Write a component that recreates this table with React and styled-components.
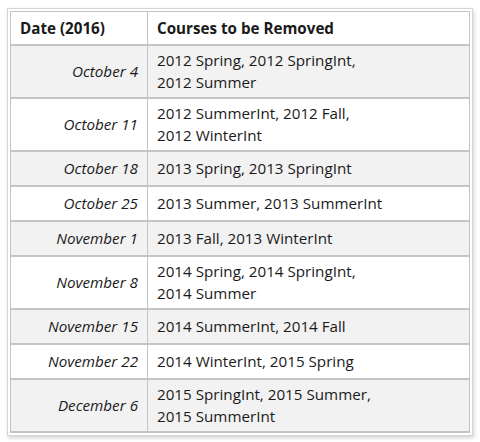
import styled, { createGlobalStyle } from 'styled-components';

const GlobalStyle = createGlobalStyle`
  html, body {
    margin: 0;
    padding: 0;
    background: #ffffff;
  }
  body {
    font-family: "Open Sans", "Noto Sans", "Liberation Sans", sans-serif;
  }
`;

const Page = styled.div`
  width: 480px;
  height: 442px;
  padding: 8px 0 0 7px;
  box-sizing: border-box;
`;

const Frame = styled.div`
  width: 466px;
  box-sizing: border-box;
  border: 1px solid #d6d6d6;
  padding: 2px;
  background: #ffffff;
  box-shadow: 1px 2px 4px rgba(0, 0, 0, 0.18);
`;

const Table = styled.table`
  width: 460px;
  border-collapse: collapse;
  border: 1px solid #bdbdbd;
  font-size: 15.2px;
  color: #1a1a1a;
`;

const HeadCell = styled.th`
  height: 33px;
  padding: 0 9px;
  text-align: left;
  font-weight: 700;
  border: 1px solid #c4c4c4;
  border-bottom-width: 2px;
  background: #ffffff;
  width: ${p => p.$w || 'auto'};
  box-sizing: border-box;
`;

const Row = styled.tr`
  background: ${p => (p.$shade ? '#f2f2f2' : '#ffffff')};
`;

const DateCell = styled.td`
  height: ${p => (p.$tall ? '51px' : '33px')};
  padding: 0 9px;
  text-align: right;
  font-style: italic;
  border: 1px solid #c4c4c4;
  border-bottom-width: 2px;
  line-height: 21px;
`;

const CourseCell = styled.td`
  padding: 0 9px;
  text-align: left;
  border: 1px solid #c4c4c4;
  border-bottom-width: 2px;
  line-height: 22px;
`;

const rows = [
  ['October 4', ['2012 Spring, 2012 SpringInt,', '2012 Summer']],
  ['October 11', ['2012 SummerInt, 2012 Fall,', '2012 WinterInt']],
  ['October 18', ['2013 Spring, 2013 SpringInt']],
  ['October 25', ['2013 Summer, 2013 SummerInt']],
  ['November 1', ['2013 Fall, 2013 WinterInt']],
  ['November 8', ['2014 Spring, 2014 SpringInt,', '2014 Summer']],
  ['November 15', ['2014 SummerInt, 2014 Fall']],
  ['November 22', ['2014 WinterInt, 2015 Spring']],
  ['December 6', ['2015 SpringInt, 2015 Summer,', '2015 SummerInt']],
];

export default function App() {
  return (
    <Page>
      <GlobalStyle />
      <Frame>
        <Table>
          <thead>
            <tr>
              <HeadCell $w="137px">Date (2016)</HeadCell>
              <HeadCell>Courses to be Removed</HeadCell>
            </tr>
          </thead>
          <tbody>
            {rows.map(([date, lines], i) => (
              <Row key={date} $shade={i % 2 === 0}>
                <DateCell $tall={lines.length > 1}>{date}</DateCell>
                <CourseCell>
                  {lines.map((l, j) => (
                    <div key={j}>{l}</div>
                  ))}
                </CourseCell>
              </Row>
            ))}
          </tbody>
        </Table>
      </Frame>
    </Page>
  );
}
